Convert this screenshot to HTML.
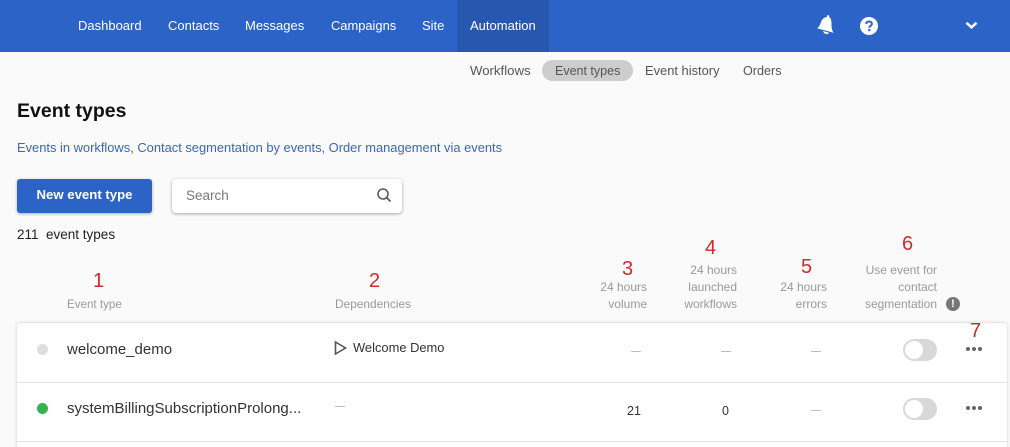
<!DOCTYPE html>
<html lang="en"><head><meta charset="utf-8"><title>Event types</title>
<style>
html,body{margin:0;padding:0;background:#fafafa}
#p{position:relative;width:1010px;height:447px;overflow:hidden;background:#fafafa;font-family:"Liberation Sans",sans-serif;color:#222}
#p div{position:absolute;white-space:nowrap}
.nav{top:17px;font-size:13px;line-height:17px;color:#fff}
.sub{top:63px;font-size:12.6px;line-height:16px;color:#555}
.h{font-size:12px;line-height:17px;color:#999;text-align:right}
.n{font-size:20px;line-height:22px;color:#cf2a2e}
.dash{height:1px;width:10px;background:#bbb}
.val{font-size:12.5px;line-height:16px;color:#333;font-weight:normal}
.tg{width:34px;height:22px;border-radius:11px;background:#d8d8d8}
.tg i{position:absolute;left:2px;top:2px;width:18px;height:18px;border-radius:50%;background:#fff}
.dots{width:16px;height:4px}
.dots i{position:absolute;top:0;width:4px;height:4px;border-radius:50%;background:#666}
</style></head><body><div id="p">
<div style="left:0;top:0;width:1010px;height:52px;background:#2b63c7"></div>
<div style="left:457px;top:0;width:92px;height:52px;background:#2857b0"></div>
<div class="nav" style="left:78px">Dashboard</div>
<div class="nav" style="left:168px">Contacts</div>
<div class="nav" style="left:245px">Messages</div>
<div class="nav" style="left:331px;font-size:12.900px">Campaigns</div>
<div class="nav" style="left:422px">Site</div>
<div class="nav" style="left:470px">Automation</div>
<svg style="position:absolute;left:815px;top:14px" width="20" height="22" viewBox="0 0 20 22"><path d="M13 1C14 1 14.500 2 14.200 3C16.500 5 16.500 8 16.500 11C16.500 14 17 16 18.500 18.800L2 14.200C4 13 5 11 6 8C7 5 9 3.500 11.800 3C12 2 12.300 1 13 1Z" fill="#fff"/><path d="M8 17L14 18.700C13 21 9 20.500 8 17Z" fill="#fff"/></svg>
<svg style="position:absolute;left:860px;top:17px" width="18" height="18" viewBox="0 0 18 18"><circle cx="9" cy="9" r="9" fill="#fff"/><path d="M6.200 7C6.300 5.300 7.500 4.500 9 4.500C10.700 4.500 11.900 5.500 11.900 6.900C11.900 8.800 9.300 8.800 9.300 10.800" fill="none" stroke="#2b63c7" stroke-width="2"/><rect x="8.200" y="12" width="2.200" height="2.200" fill="#2b63c7"/></svg>
<svg style="position:absolute;left:965px;top:21px" width="13" height="9" viewBox="0 0 13 9"><path d="M1.500 1.800L6.500 6.300L11.500 1.800" fill="none" stroke="#fff" stroke-width="2.600"/></svg>

<div class="sub" style="left:470px;font-size:13.200px">Workflows</div>
<div style="left:542px;top:60px;width:91px;height:21px;border-radius:11px;background:#cdcdcd"></div>
<div class="sub" style="left:555px;font-size:12.500px">Event types</div>
<div class="sub" style="left:645px;font-size:12.900px">Event history</div>
<div class="sub" style="left:743px">Orders</div>

<div style="left:17px;top:99px;font-size:19.500px;line-height:24px;font-weight:bold;color:#111">Event types</div>
<div style="left:17px;top:140px;font-size:12.900px;line-height:16px;color:#3a68b4">Events in workflows, Contact segmentation by events, Order management via events</div>

<div style="left:17px;top:179px;width:135px;height:34px;border-radius:3px;background:#2b63c7;box-shadow:0 1px 3px rgba(0,0,0,.3);color:#fff;font-size:13.200px;font-weight:bold;line-height:31px;text-align:center">New event type</div>
<div style="left:172px;top:179px;width:230px;height:34px;border-radius:4px;background:#fff;box-shadow:0 1px 3px rgba(0,0,0,.35)"></div>
<div style="left:186px;top:187px;font-size:13.500px;line-height:17px;color:#777">Search</div>
<svg style="position:absolute;left:376px;top:187px" width="16" height="16" viewBox="0 0 16 16"><circle cx="7" cy="7" r="5" fill="none" stroke="#555" stroke-width="1.500"/><path d="M10.500 10.500L14.500 14.500" stroke="#555" stroke-width="1.700"/></svg>
<div style="left:17px;top:226px;font-size:13.500px;line-height:17px;color:#222">211&nbsp; event types</div>

<div class="n" style="left:93px;top:270px">1</div>
<div class="n" style="left:369px;top:270px">2</div>
<div class="n" style="left:622px;top:258px">3</div>
<div class="n" style="left:705px;top:237px">4</div>
<div class="n" style="left:801px;top:256px">5</div>
<div class="n" style="left:902px;top:233px">6</div>
<div class="h" style="left:67px;top:296px;font-size:11.600px">Event type</div>
<div class="h" style="left:335px;top:296px;font-size:11.900px">Dependencies</div>
<div class="h" style="right:363px;top:279px">24 hours<br>volume</div>
<div class="h" style="right:273px;top:262px">24 hours<br>launched<br>workflows</div>
<div class="h" style="right:183px;top:279px">24 hours<br>errors</div>
<div class="h" style="right:73px;top:262px">Use event for<br>contact<br>segmentation</div>
<div style="left:946px;top:297px;width:14px;height:14px;border-radius:50%;background:#777;color:#fff;font-size:11px;font-weight:bold;line-height:14px;text-align:center">!</div>

<div style="left:17px;top:323px;width:990px;height:140px;border-radius:3px;background:#fff;box-shadow:0 0 3px rgba(0,0,0,.2)"></div>
<div style="left:17px;top:382px;width:990px;height:1px;background:#e4e4e4"></div>
<div style="left:17px;top:441px;width:990px;height:1px;background:#e4e4e4"></div>
<div class="n" style="left:970px;top:320px">7</div>

<div style="left:37px;top:344px;width:11px;height:11px;border-radius:50%;background:#dedede"></div>
<div style="left:67px;top:341px;font-size:15px;line-height:18px;color:#333">welcome_demo</div>
<svg style="position:absolute;left:334px;top:340px" width="14" height="16" viewBox="0 0 14 16"><path d="M1.500 2L11.500 8L1.500 14Z" fill="none" stroke="#555" stroke-width="1.600"/></svg>
<div style="left:353px;top:340px;font-size:12.900px;line-height:16px;color:#333">Welcome Demo</div>
<div class="dash" style="left:631px;top:351px"></div>
<div class="dash" style="left:721px;top:351px"></div>
<div class="dash" style="left:811px;top:351px"></div>
<div class="tg" style="left:903px;top:339px"><i></i></div>
<div class="dots" style="left:966px;top:347px"><i style="left:0"></i><i style="left:6px"></i><i style="left:12px"></i></div>

<div style="left:37px;top:403px;width:11px;height:11px;border-radius:50%;background:#35b34f"></div>
<div style="left:67px;top:400px;font-size:15px;line-height:18px;color:#333">systemBillingSubscriptionProlong...</div>
<div class="dash" style="left:335px;top:406px"></div>
<div class="val" style="left:627px;top:403px">21</div>
<div class="val" style="left:722px;top:403px">0</div>
<div class="dash" style="left:811px;top:410px"></div>
<div class="tg" style="left:903px;top:398px"><i></i></div>
<div class="dots" style="left:966px;top:406px"><i style="left:0"></i><i style="left:6px"></i><i style="left:12px"></i></div>
</div></body></html>
